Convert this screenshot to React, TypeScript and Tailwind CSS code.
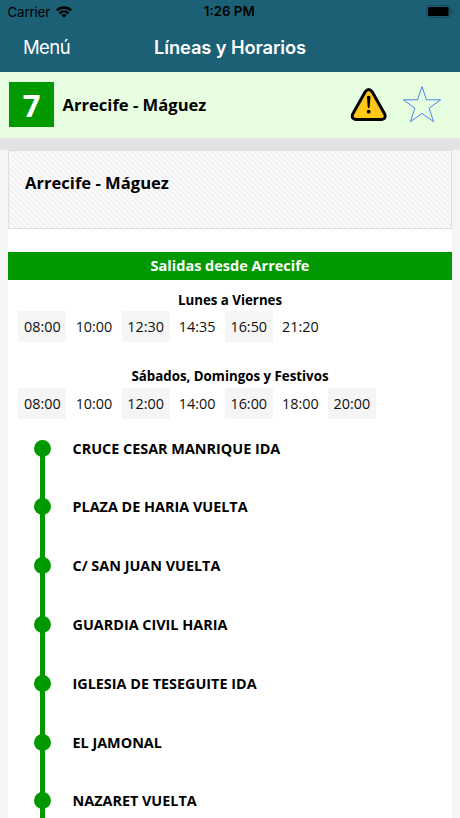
const LINE = { number: "7", name: "Arrecife - Máguez" };

const SCHEDULES = [
  {
    days: "Lunes a Viernes",
    times: ["08:00", "10:00", "12:30", "14:35", "16:50", "21:20"],
  },
  {
    days: "Sábados, Domingos y Festivos",
    times: ["08:00", "10:00", "12:00", "14:00", "16:00", "18:00", "20:00"],
  },
];

const STOPS = [
  "CRUCE CESAR MANRIQUE IDA",
  "PLAZA DE HARIA VUELTA",
  "C/ SAN JUAN VUELTA",
  "GUARDIA CIVIL HARIA",
  "IGLESIA DE TESEGUITE IDA",
  "EL JAMONAL",
  "NAZARET VUELTA",
];

function WifiIcon() {
  return (
    <svg width="16" height="12" viewBox="0 0 16 12" fill="none" stroke="#000" strokeWidth="2.4">
      <path d="M0.9 4.4a10.1 10.1 0 0 1 14.2 0" />
      <path d="M3.4 7.3a6.5 6.5 0 0 1 9.2 0" />
      <path d="M8 11.7 5.4 9.3a3.7 3.7 0 0 1 5.2 0z" fill="#000" stroke="none" />
    </svg>
  );
}

function BatteryIcon() {
  return (
    <svg width="28" height="13" viewBox="0 0 28 13">
      <rect x="0.5" y="0.5" width="23.6" height="12" rx="3.4" fill="none" stroke="#134857" />
      <rect x="2" y="2" width="20.6" height="9" rx="1.6" fill="#000" />
      <path d="M25.4 4.4v4.2q1.5-.6 1.5-2.1t-1.5-2.1z" fill="#134857" />
    </svg>
  );
}

function WarningIcon() {
  return (
    <svg width="38" height="36" viewBox="0 0 38 36">
      <path
        d="M15.4 4.6q3.3-4.2 6.6 0L34.8 27.2q1.7 4.7-3 5.2H5.6q-4.7-.5-3-5.2z"
        fill="#ffc815"
        stroke="#000"
        strokeWidth="3"
        strokeLinejoin="round"
      />
      <path d="M16.9 9.6q1.8-1.8 3.6 0l-.9 10.8q-.9 1.2-1.8 0z" fill="#000" />
      <circle cx="18.7" cy="24.7" r="1.9" fill="#000" />
    </svg>
  );
}

function StarIcon() {
  return (
    <svg width="40" height="38" viewBox="0 0 40 38" fill="none" stroke="#4b83e6" strokeWidth="1">
      <path d="M20 0.5 24.4 13.8H38.6L27.1 22.2 31.6 35.7 20 27.4 8.4 35.7 12.9 22.2 1.4 13.8H15.6z" />
    </svg>
  );
}

function Header() {
  return (
    <header className="h-[71.5px] shrink-0 bg-[#1b6075] font-[Inter,sans-serif]">
      <div className="grid h-6 grid-cols-3 items-center pr-[6px] pl-[7.5px] text-[13px] text-black">
        <div className="flex items-center gap-[6px]">
          <span className="pt-px text-[13.3px] tracking-[-0.15px]">Carrier</span>
          <WifiIcon />
        </div>
        <span className="-ml-[3px] text-center text-[13.3px] font-semibold">1:26 PM</span>
        <div className="flex justify-end pb-px">
          <BatteryIcon />
        </div>
      </div>
      <div className="grid h-[47px] grid-cols-[1fr_auto_1fr] items-center px-[23px] text-white">
        <span className="text-[18.5px] tracking-[-0.6px]">Menú</span>
        <h1 className="text-[18.3px] font-semibold tracking-[-0.1px]">Líneas y Horarios</h1>
      </div>
    </header>
  );
}

function Schedule({ days, times }: { days: string; times: string[] }) {
  return (
    <section className="h-[76.5px]">
      <h3 className="h-[31px] pt-[9.5px] text-center text-[13.3px] leading-[20px] font-bold">{days}</h3>
      <div className="flex gap-[3.6px] pl-[10.4px]">
        {times.map((time, index) => (
          <span
            key={time}
            className={`flex h-[31px] w-12 items-center justify-center pt-px text-[14.4px] text-[#111] ${
              index % 2 === 0 ? "bg-[#f5f5f5]" : ""
            }`}
          >
            {time}
          </span>
        ))}
      </div>
    </section>
  );
}

export default function App() {
  return (
    <div className="flex h-[818px] w-[460px] flex-col overflow-hidden bg-[#f5f5f5] font-['Open_Sans',sans-serif] text-black">
      <Header />

      <div className="flex h-[66.5px] shrink-0 items-center bg-[#e8fee0] pr-[18px] pl-[9px]">
        <div className="flex size-[45px] items-center justify-center bg-[#009a00] text-[31px] font-bold text-white">
          {LINE.number}
        </div>
        <h2 className="ml-[8.5px] flex-1 pt-0.5 text-[16.6px] font-bold">{LINE.name}</h2>
        <WarningIcon />
        <div className="ml-[14px]">
          <StarIcon />
        </div>
      </div>
      <div className="h-[11.5px] shrink-0 bg-[#e3e3e3]" />

      <main className="mx-2 flex-1 bg-white">
        <div className="h-[79.5px] border border-[#dedede] bg-[repeating-linear-gradient(45deg,#f2f2f2_0px,#f2f2f2_1.9px,#fbfbfb_1.9px,#fbfbfb_3.77px)] px-4 pt-5">
          <h2 className="text-[16.6px] leading-6 font-bold">{LINE.name}</h2>
        </div>

        <div className="mt-[23px] flex h-7 items-center justify-center bg-[#009a00] text-[14.5px] font-bold text-white">
          Salidas desde Arrecife
        </div>

        {SCHEDULES.map((schedule) => (
          <Schedule key={schedule.days} {...schedule} />
        ))}

        <ul className="pt-[6.5px]">
          {STOPS.map((stop) => (
            <li key={stop} className="flex h-[58.83px]">
              <div className="ml-[26px] flex w-[17px] flex-col items-center">
                <span className="size-[17px] shrink-0 rounded-full bg-[#009a00]" />
                <span className="-my-px w-[5px] flex-1 bg-[#009a00]" />
              </div>
              <span className="ml-[21.5px] text-[14.4px] leading-[17px] font-bold">{stop}</span>
            </li>
          ))}
        </ul>
      </main>
    </div>
  );
}
